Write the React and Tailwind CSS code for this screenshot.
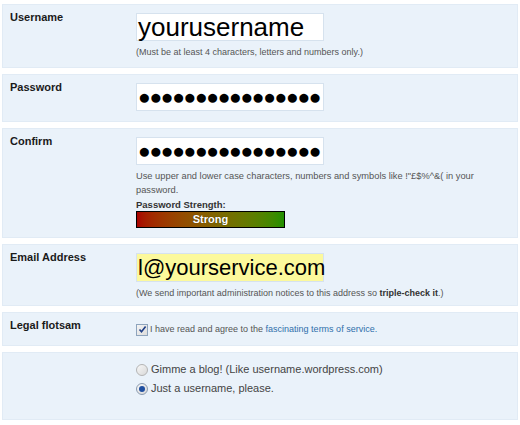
import React from 'react'

const Section = ({ label, children, className = '' }) => (
  <div className={`flex bg-[#eaf2fa] border border-[#e1ebf5] ${className}`}>
    <div className="w-[133px] shrink-0 pl-[7px] pt-[6px] text-[11px] leading-[13px] font-bold text-[#1a1a1a]">
      {label}
    </div>
    <div className="flex-1 pt-[8px]">{children}</div>
  </div>
)

const Dots = ({ count }) => (
  <span className="tracking-[-1.3px]">{'●'.repeat(count)}</span>
)

function App() {
  return (
    <div className="w-[520px] h-[425px] bg-white font-['Liberation_Sans',Arial,sans-serif] px-[2px] pt-[4px] flex flex-col gap-[6px]">
      {/* Username */}
      <Section label="Username" className="h-[64px]">
        <div className="w-[188px] h-[28px] bg-white border border-[#d6e2ee] pl-[1px] text-[26px] leading-[26px] text-black">
          yourusername
        </div>
        <p className="mt-[5px] text-[9px] leading-[12px] text-[#555]">
          (Must be at least 4 characters, letters and numbers only.)
        </p>
      </Section>

      {/* Password */}
      <Section label="Password" className="h-[48px]">
        <div className="w-[188px] h-[28px] bg-white border border-[#d6e2ee] pl-[1px] text-[21px] leading-[26px] text-black">
          <Dots count={16} />
        </div>
      </Section>

      {/* Confirm */}
      <Section label="Confirm" className="h-[110px]">
        <div className="w-[188px] h-[28px] bg-white border border-[#d6e2ee] pl-[1px] text-[21px] leading-[26px] text-black">
          <Dots count={16} />
        </div>
        <p className="mt-[4px] w-[350px] text-[9.3px] leading-[14px] text-[#555]">
          Use upper and lower case characters, numbers and symbols like !"£$%^&amp;( in your password.
        </p>
        <p className="mt-[2px] text-[9.5px] leading-[12px] font-bold text-[#333]">Password Strength:</p>
        <div className="w-[149px] h-[17px] border border-black bg-gradient-to-r from-[#a80000] to-[#1f9000] flex items-center justify-center text-[11px] font-bold text-white [text-shadow:0_0_1px_rgba(0,0,0,0.6)]">
          Strong
        </div>
      </Section>

      {/* Email */}
      <Section label="Email Address" className="h-[62px]">
        <div className="w-[188px] h-[29px] bg-[#fcf99c] border border-[#d6e2ee] pl-[1px] text-[22px] leading-[27px] text-black">
          l@yourservice.com
        </div>
        <p className="mt-[5px] text-[9px] leading-[12px] text-[#555]">
          (We send important administration notices to this address so <b className="text-[#333]">triple-check it</b>.)
        </p>
      </Section>

      {/* Legal */}
      <Section label="Legal flotsam" className="h-[34px]">
        <div className="flex items-center gap-[2px] mt-[2px] text-[9px] leading-[13px] text-[#555]">
          <span className="w-[12px] h-[12px] border border-[#8ea4bd] bg-gradient-to-br from-[#f4f4f4] to-[#dcdcdc] flex items-center justify-center">
            <svg width="9" height="9" viewBox="0 0 9 9">
              <path d="M1.5 4.5 L3.5 6.8 L7.6 1.6" fill="none" stroke="#1f3f87" strokeWidth="1.6" />
            </svg>
          </span>
          <span>
            I have read and agree to the <span className="text-[#2f6fab]">fascinating terms of service.</span>
          </span>
        </div>
      </Section>

      {/* Blog choice */}
      <Section label="" className="h-[68px]">
        <div className="flex flex-col gap-[2px] text-[11px] leading-[17px] text-[#444]">
          <div className="flex items-center gap-[3px]">
            <span className="w-[12px] h-[12px] rounded-full border border-[#b4b4b4] bg-gradient-to-br from-[#f8f8f8] to-[#d8d8d8]" />
            <span>Gimme a blog! (Like username.wordpress.com)</span>
          </div>
          <div className="flex items-center gap-[3px]">
            <span className="w-[12px] h-[12px] rounded-full border border-[#8a9bb0] bg-gradient-to-br from-[#f8f8f8] to-[#d8d8d8] flex items-center justify-center">
              <span className="w-[6px] h-[6px] rounded-full bg-[#1f4fa0]" />
            </span>
            <span>Just a username, please.</span>
          </div>
        </div>
      </Section>
    </div>
  )
}

export default App
